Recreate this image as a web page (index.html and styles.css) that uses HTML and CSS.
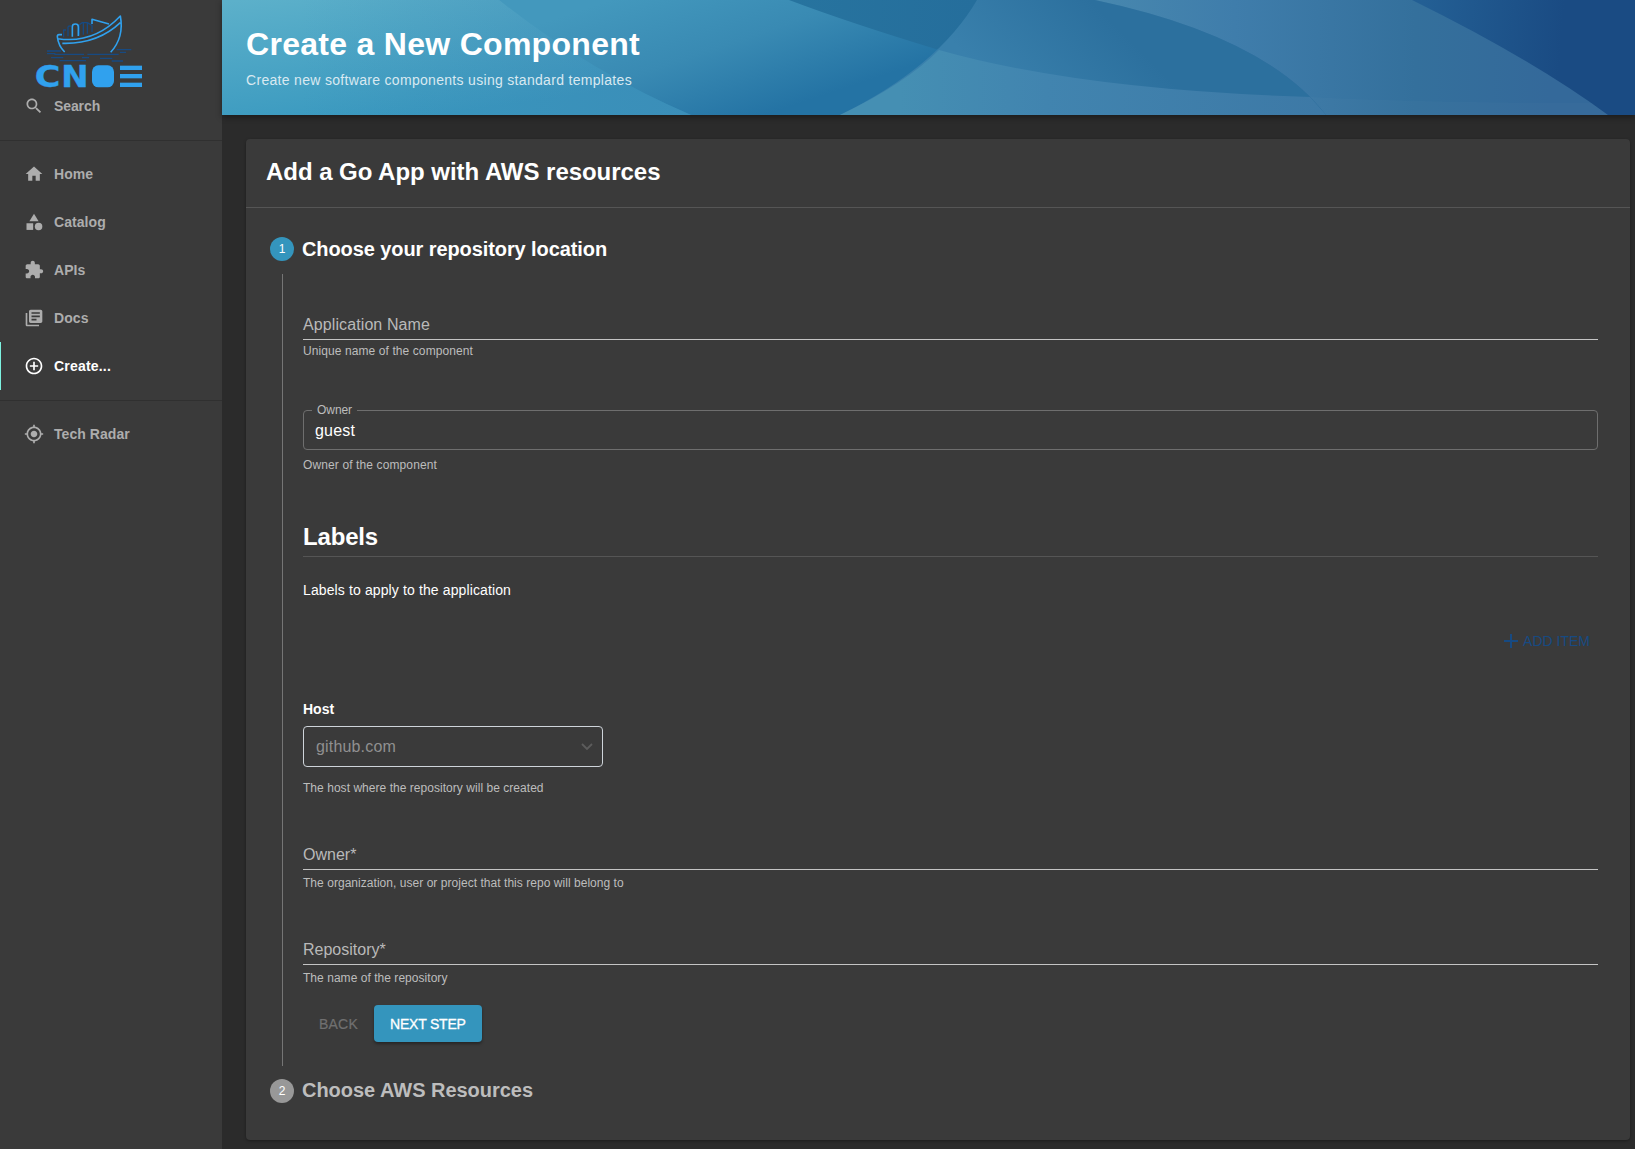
FILE: index.html
```html
<!DOCTYPE html>
<html lang="en">
<head>
<meta charset="utf-8">
<title>Create a New Component</title>
<link rel="stylesheet" href="styles.css">
</head>
<body>
<div class="app">
  <aside class="sidebar">
    <svg class="logo" viewBox="99 36 342 234" role="img" aria-label="CNOE">
      <g class="logo-deep">
        <path d="M191 112V90h7M204 109V82q0-4 5-4h5M238 106V74l8-6h16l14 8v20M250 104V70M262 101V70"/>
        <path d="M141 153h42M141 161h25M163 163h89M262 163h94M153 173h37M246 173h21M179 182h79M300 175h37M335 183h34M350 149h44M360 157h18"/>
      </g>
      <g class="logo-light">
        <path d="M186 104h-9q-5 0-5 6 3 28 22 46M174 116q108 16 187-68 12 64-29 109M187 130q105 3 174-62M217 110V80q0-8 9-8t9 8v28M276 72V58l51 14"/>
      </g>
      <g class="logo-word">
        <text x="104" y="262" textLength="77" lengthAdjust="spacingAndGlyphs">C</text>
        <text x="184" y="262" textLength="82" lengthAdjust="spacingAndGlyphs">N</text>
        <rect x="276" y="196" width="66" height="66" rx="19"/>
        <rect x="360" y="197" width="66" height="13"/>
        <rect x="360" y="222" width="66" height="13"/>
        <rect x="360" y="248" width="66" height="13"/>
      </g>
    </svg>
    <a class="nav-item nav-search"><svg class="icon" viewBox="0 0 24 24"><path d="M15.5 14h-.79l-.28-.27C15.41 12.59 16 11.11 16 9.5 16 5.91 13.09 3 9.5 3S3 5.91 3 9.5 5.91 16 9.5 16c1.61 0 3.09-.59 4.23-1.57l.27.28v.79l5 4.99L20.49 19l-4.99-5zm-6 0C7.01 14 5 11.99 5 9.5S7.01 5 9.5 5 14 7.01 14 9.5 11.99 14 9.5 14z"/></svg><span>Search</span></a>
    <nav class="nav-group">
      <a class="nav-item"><svg class="icon" viewBox="0 0 24 24"><path d="M10 20v-6h4v6h5v-8h3L12 3 2 12h3v8z"/></svg><span>Home</span></a>
      <a class="nav-item"><svg class="icon" viewBox="0 0 24 24"><path d="M12 2l-5.5 9h11z"/><circle cx="17.5" cy="17.5" r="4.5"/><path d="M3 13.5h8v8H3z"/></svg><span>Catalog</span></a>
      <a class="nav-item"><svg class="icon" viewBox="0 0 24 24"><path d="M20.5 11H19V7c0-1.1-.9-2-2-2h-4V3.5C13 2.12 11.88 1 10.5 1S8 2.12 8 3.5V5H4c-1.1 0-1.99.9-1.99 2v3.8H3.5c1.49 0 2.7 1.21 2.7 2.7s-1.21 2.7-2.7 2.7H2V20c0 1.1.9 2 2 2h3.8v-1.5c0-1.49 1.21-2.7 2.7-2.7 1.49 0 2.7 1.21 2.7 2.7V22H17c1.1 0 2-.9 2-2v-4h1.5c1.38 0 2.5-1.12 2.5-2.5S21.88 11 20.5 11z"/></svg><span>APIs</span></a>
      <a class="nav-item"><svg class="icon" viewBox="0 0 24 24"><path d="M4 6H2v14c0 1.1.9 2 2 2h14v-2H4V6zm16-4H8c-1.1 0-2 .9-2 2v12c0 1.1.9 2 2 2h12c1.1 0 2-.9 2-2V4c0-1.1-.9-2-2-2zm-1 9H9V9h10v2zm-4 4H9v-2h6v2zm4-8H9V5h10v2z"/></svg><span>Docs</span></a>
      <a class="nav-item nav-active"><svg class="icon" viewBox="0 0 24 24"><path d="M13 7h-2v4H7v2h4v4h2v-4h4v-2h-4V7zm-1-5C6.48 2 2 6.48 2 12s4.48 10 10 10 10-4.48 10-10S17.52 2 12 2zm0 18c-4.41 0-8-3.59-8-8s3.59-8 8-8 8 3.59 8 8-3.59 8-8 8z"/></svg><span>Create...</span></a>
    </nav>
    <nav class="nav-group">
      <a class="nav-item"><svg class="icon" viewBox="0 0 24 24"><path d="M12 8c-2.21 0-4 1.79-4 4s1.79 4 4 4 4-1.79 4-4-1.79-4-4-4zm8.94 3c-.46-4.17-3.77-7.48-7.94-7.94V1h-2v2.06C6.83 3.52 3.52 6.83 3.06 11H1v2h2.06c.46 4.17 3.77 7.48 7.94 7.94V23h2v-2.06c4.17-.46 7.48-3.77 7.94-7.94H23v-2h-2.06zM12 19c-3.87 0-7-3.13-7-7s3.13-7 7-7 7 3.13 7 7-3.13 7-7 7z"/></svg><span>Tech Radar</span></a>
    </nav>
  </aside>

  <main class="main">
    <header class="hero">
      <svg class="hero-waves" viewBox="222 0 1413 115" preserveAspectRatio="none" aria-hidden="true">
        <defs>
          <linearGradient id="base" gradientUnits="userSpaceOnUse" x1="780" y1="0" x2="1560" y2="60"><stop offset="0" stop-color="#27749f"/><stop offset=".25" stop-color="#256e9c"/><stop offset=".82" stop-color="#235f94"/><stop offset="1" stop-color="#1a4b83"/></linearGradient>
          <linearGradient id="mid" gradientUnits="userSpaceOnUse" x1="670" y1="-20" x2="720" y2="130"><stop offset="0" stop-color="#4398bd"/><stop offset=".5" stop-color="#398ab3"/><stop offset="1" stop-color="#2473a4"/></linearGradient>
          <linearGradient id="left" gradientUnits="userSpaceOnUse" x1="380" y1="-20" x2="400" y2="120"><stop offset="0" stop-color="#5cb0ca"/><stop offset="1" stop-color="#3898bf"/></linearGradient>
          <linearGradient id="shade" gradientUnits="userSpaceOnUse" x1="300" y1="0" x2="690" y2="0"><stop offset="0" stop-color="#3f7fae" stop-opacity="0"/><stop offset="1" stop-color="#3f7fae" stop-opacity=".4"/></linearGradient>
          <linearGradient id="lens" gradientUnits="userSpaceOnUse" x1="1000" y1="90" x2="1090" y2="0"><stop offset="0" stop-color="#3980ac"/><stop offset="1" stop-color="#2c709e"/></linearGradient>
          <linearGradient id="low" gradientUnits="userSpaceOnUse" x1="900" y1="0" x2="1320" y2="0"><stop offset="0" stop-color="#458fb3"/><stop offset=".35" stop-color="#4184af"/><stop offset="1" stop-color="#3d79a6"/></linearGradient>
          <linearGradient id="right" gradientUnits="userSpaceOnUse" x1="1100" y1="0" x2="1550" y2="0"><stop offset="0" stop-color="#4787ae"/><stop offset=".3" stop-color="#3f7dab"/><stop offset=".7" stop-color="#34709c"/><stop offset="1" stop-color="#34699a"/></linearGradient>
        </defs>
        <path fill="url(#base)" d="M222 0h1413v115H222z"/>
        <path fill="url(#mid)" d="M222 0H789Q850 23 939 50Q905 84 840 115H222z"/>
        <path fill="url(#left)" d="M222 0H499Q588 71 691 115H222z"/>
        <path fill="url(#shade)" d="M222 0H499Q588 71 691 115H222z"/>
        <path fill="url(#lens)" d="M977 0H1095Q1265 36 1326 115H840Q938 67 977 0z"/>
        <path fill="url(#low)" d="M939 50Q1080 90 1310 97L1326 115H840Q905 84 939 50z"/>
        <path fill="url(#right)" d="M1095 0H1412Q1530 58 1608 115H1326Q1265 36 1095 0z"/>
        <path fill="#fff" fill-opacity=".02" d="M1310 97Q1420 103 1592 103L1608 115H1326z"/>
      </svg>
      <h1 class="hero-title">Create a New Component</h1>
      <p class="hero-sub">Create new software components using standard templates</p>
    </header>

    <section class="card">
      <div class="card-head"><h2 class="card-title">Add a Go App with AWS resources</h2></div>
      <div class="card-body">
        <div class="step"><span class="badge badge-on">1</span><span class="step-label">Choose your repository location</span></div>
        <form class="step-content">
          <div class="line-field line-first">Application Name</div>
          <p class="help help-tight">Unique name of the component</p>

          <div class="outlined"><span class="notch">Owner</span><span>guest</span></div>
          <p class="help help-outlined">Owner of the component</p>

          <h3 class="group-title">Labels</h3>
          <p class="group-text">Labels to apply to the application</p>
          <div class="add-row"><span class="add"><svg class="plus" viewBox="0 0 24 24"><path d="M19 13h-6v6h-2v-6H5v-2h6V5h2v6h6v2z"/></svg><span>ADD ITEM</span></span></div>

          <p class="host-label">Host</p>
          <div class="select"><span>github.com</span><svg class="chevron" viewBox="0 0 12 8"><path d="M1 1l5 5 5-5"/></svg></div>
          <p class="help help-select">The host where the repository will be created</p>

          <div class="line-field line-next">Owner*</div>
          <p class="help">The organization, user or project that this repo will belong to</p>

          <div class="line-field line-next">Repository*</div>
          <p class="help">The name of the repository</p>

          <div class="actions"><span class="back">BACK</span><span class="next">NEXT STEP</span></div>
        </form>
        <div class="step step-off"><span class="badge">2</span><span class="step-label">Choose AWS Resources</span></div>
      </div>
    </section>
  </main>
</div>
</body>
</html>
```

FILE: styles.css
```css
* { box-sizing: border-box; }
body { margin: 0; background: #2b2b2b; color: #fff; font-family: "Liberation Sans", Arial, sans-serif; }
h1, h2, h3, p { margin: 0; }
.app { display: flex; height: 1149px; overflow: hidden; }

.sidebar { width: 222px; flex: none; background: #3a3a3a; }
.logo { display: block; width: 114px; height: 78px; margin: 12px 0 0 33px; overflow: visible; }
.logo-deep, .logo-light { fill: none; stroke-linejoin: round; }
.logo-deep { stroke: #174a82; stroke-width: 4; }
.logo-light { stroke: #30a1ee; stroke-width: 4.8; }
.logo-word { fill: #30a1ee; font: bold 91px "DejaVu Sans", sans-serif; }
.logo-word text { stroke: #30a1ee; stroke-width: 1; }
.nav-item { display: flex; align-items: center; gap: 10px; height: 48px; padding-left: 24px; color: #adadad; font-size: 14px; font-weight: 700; line-height: 20px; letter-spacing: .06px; }
.nav-search { height: 32px; margin-bottom: 18px; letter-spacing: -.1px; }
.nav-group { border-top: 1px solid #303030; padding: 9px 0 10px; }
.nav-active { color: #fff; border-left: 1px solid #7df3e1; padding-left: 23px; letter-spacing: .19px; }
.icon { width: 20px; height: 20px; fill: currentColor; flex: none; }

.main { flex: 1; min-width: 0; }
.hero { position: relative; height: 115px; padding: 25px 24px 0; box-shadow: 0 2px 6px rgba(0, 0, 0, .4); }
.hero-waves { position: absolute; inset: 0; width: 100%; height: 100%; }
.hero-title, .hero-sub { position: relative; }
.hero-title { font-size: 32px; line-height: 38px; letter-spacing: .29px; }
.hero-sub { margin-top: 7px; font-size: 14px; line-height: 20px; letter-spacing: .311px; color: #d9e9f1; }

.card { margin: 24px 5px 0 24px; background: #3a3a3a; border-radius: 4px; box-shadow: 0 1px 3px rgba(0, 0, 0, .35); }
.card-head { height: 69px; padding: 18px 20px 0; border-bottom: 1px solid #555; }
.card-title { font-size: 24px; line-height: 29px; letter-spacing: -.036px; }
.card-body { padding: 29px 32px 37px 24px; }
.step { display: flex; align-items: center; gap: 8px; height: 24px; }
.step-label { font-size: 20px; font-weight: 700; line-height: 24px; letter-spacing: -.09px; }
.step-off .step-label { color: #bdbdbd; letter-spacing: -.027px; padding-bottom: 2px; }
.badge { width: 24px; height: 24px; border-radius: 50%; background: #989898; font-size: 12px; line-height: 24px; text-align: center; }
.badge-on { background: #3495bd; }
.step-content { margin: 13px 0 13px 12px; padding: 40px 0 24px 20px; border-left: 1px solid #757575; }

.line-field { height: 26px; border-bottom: 1px solid #c4c4c4; font-size: 16px; line-height: 22px; letter-spacing: 0; color: #b9b9b9; }
.line-first { letter-spacing: .1px; }
.line-next { margin-top: 46px; }
.help { margin-top: 3px; font-size: 12px; line-height: 20px; letter-spacing: .04px; color: #bdbdbd; }
.help-tight { margin-top: 1px; letter-spacing: .09px; }
.help-outlined { margin-top: 5px; letter-spacing: .117px; }
.help-select { margin-top: 11px; }
.outlined { position: relative; display: flex; align-items: center; height: 40px; margin-top: 49px; padding: 2px 0 0 11px; border: 1px solid #6e6e6e; border-radius: 4px; font-size: 16px; line-height: 20px; letter-spacing: .17px; }
.notch { position: absolute; left: 8px; top: -11px; padding: 0 5px; background: #3a3a3a; color: #bdbdbd; font-size: 12px; letter-spacing: -.06px; }
.group-title { height: 35px; margin-top: 47px; border-bottom: 1px solid #555; font-size: 24px; line-height: 30px; letter-spacing: -.17px; }
.group-text { margin-top: 23px; font-size: 14px; line-height: 20px; letter-spacing: .119px; }
.add-row { display: flex; justify-content: flex-end; height: 30px; margin-top: 26px; padding-right: 8px; }
.add { display: flex; align-items: center; color: #174a82; font-size: 14px; line-height: 20px; }
.plus { width: 24px; height: 24px; fill: currentColor; }
.host-label { margin-top: 43px; font-size: 14px; font-weight: 700; line-height: 20px; }
.select { display: flex; align-items: center; justify-content: space-between; width: 300px; height: 41px; margin-top: 7px; padding: 0 9px 0 12px; border: 1px solid #ced4da; border-radius: 4px; color: #909090; font-size: 16px; line-height: 20px; letter-spacing: .17px; }
.chevron { width: 12px; height: 8px; fill: none; stroke: #5c5c5c; stroke-width: 1.8; }
.actions { display: flex; align-items: center; height: 37px; margin-top: 17px; padding-left: 16px; gap: 16px; font-size: 14px; line-height: 20px; }
.back { width: 39px; color: #707070; letter-spacing: .2px; -webkit-text-stroke: .2px currentColor; }
.next { width: 108px; height: 37px; padding: 1px 0 0 16px; border-radius: 4px; background: #3495bd; line-height: 37px; letter-spacing: -.2px; white-space: nowrap; -webkit-text-stroke: .3px currentColor; box-shadow: 0 2px 3px rgba(0, 0, 0, .35); }
```
